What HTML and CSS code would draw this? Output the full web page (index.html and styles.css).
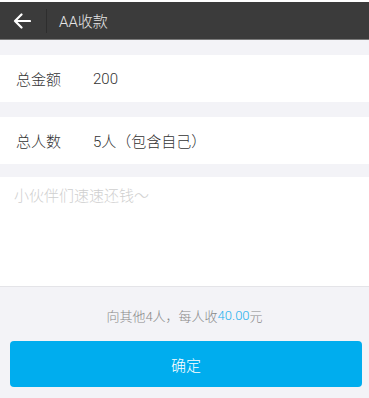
FILE: index.html
```html
<!DOCTYPE html>
<html lang="zh-CN">
<head>
    <meta charset="UTF-8">
    <meta name="viewport" content="width=device-width, initial-scale=1.0">
    <title>AA收款</title>
    <link rel="stylesheet" href="styles.css">
</head>
<body>
    <div class="topbar">
        <span class="back">
            <svg width="18" height="16" viewBox="0 0 18 16">
                <path d="M17 8H2M8.5 1.5L2 8l6.5 6.5" fill="none" stroke="#fff" stroke-width="2.2" stroke-linecap="round" stroke-linejoin="round"/>
            </svg>
        </span>
        <span class="divider"></span>
        <span class="title">AA收款</span>
    </div>

    <div class="row">
        <span class="label">总金额</span><span class="value">200</span>
    </div>
    <div class="row">
        <span class="label">总人数</span><span class="value">5人（包含自己）</span>
    </div>

    <div class="note">小伙伴们速速还钱～</div>

    <div class="summary">向其他4人，每人收<span class="money">40.00</span>元</div>
    <button class="confirm">确定</button>
</body>
</html>
```
FILE: styles.css
```css
body {
    margin: 0;
    border-top: 2px solid #fff;
    background-color: #f3f3f7;
    font-family: Roboto, "Noto Sans CJK SC", sans-serif;
    font-weight: 300;
    color: #333;
}
.topbar {
    height: 37px;
    background-color: #3b3b3b;
    border-bottom: 1px solid #7a7a7a;
    display: flex;
    align-items: center;
}
.back {
    width: 46px;
    display: flex;
    justify-content: center;
    padding-right: 2px;
    box-sizing: border-box;
}
.back svg {
    display: block;
}
.divider {
    width: 1px;
    height: 24px;
    background-color: #2e2e2e;
}
.title {
    margin-left: 12px;
    color: #e6e6e6;
    font-size: 15px;
}
.row {
    height: 47px;
    margin-top: 15px;
    background-color: #fff;
    display: flex;
    align-items: center;
    padding-left: 16px;
    font-size: 15px;
}
.label {
    width: 77px;
}
.note {
    margin-top: 13px;
    height: 110px;
    background-color: #fff;
    border-bottom: 1px solid #e4e4e8;
    padding: 7px 14px;
    box-sizing: border-box;
    color: #cfcfcf;
    font-size: 15px;
}
.summary {
    height: 54px;
    display: flex;
    align-items: center;
    justify-content: center;
    font-size: 13px;
    color: #888;
    padding-top: 3px;
    box-sizing: border-box;
}
.money {
    color: #1ab0ee;
}
.confirm {
    display: block;
    width: 352px;
    height: 46px;
    margin: 0 0 0 10px;
    border: none;
    border-radius: 4px;
    background-color: #00adee;
    color: #fff;
    font-family: Roboto, "Noto Sans CJK SC", sans-serif;
    font-weight: 300;
    font-size: 15px;
    padding: 0;
}
```
